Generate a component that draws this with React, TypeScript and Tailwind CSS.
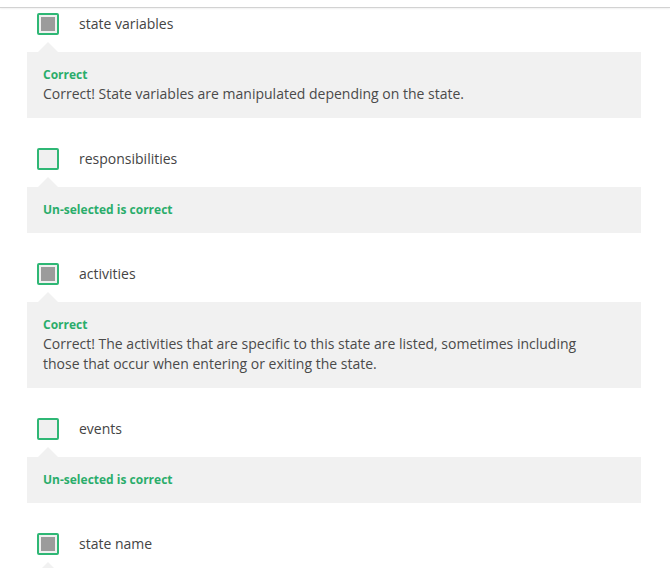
import React from "react";

type Item = {
  label: string;
  checked: boolean;
  title?: string;
  body?: string;
};

const ITEMS: Item[] = [
  {
    label: "state variables",
    checked: true,
    title: "Correct",
    body: "Correct! State variables are manipulated depending on the state.",
  },
  { label: "responsibilities", checked: false, title: "Un-selected is correct" },
  {
    label: "activities",
    checked: true,
    title: "Correct",
    body: "Correct! The activities that are specific to this state are listed, sometimes including those that occur when entering or exiting the state.",
  },
  { label: "events", checked: false, title: "Un-selected is correct" },
  // last row runs past the fold, only the pointer shows
  { label: "state name", checked: true },
];

function Checkbox({ checked }: { checked: boolean }) {
  return (
    <div className="w-[22px] h-[22px] rounded-[2px] border-2 border-[#2fb775] bg-[#f0f0f0] flex items-center justify-center flex-shrink-0">
      {checked && <div className="w-[14px] h-[14px] bg-[#9b9b9b]" />}
    </div>
  );
}

export default function App() {
  return (
    <div className="h-screen bg-white font-['Open_Sans',sans-serif] overflow-hidden">
      {/* top edge */}
      <div className="h-[8px] border-b border-[#d2d2d2] shadow-[0_1px_2px_rgba(0,0,0,0.06)]" />

      <div className="pl-[27px] pr-[29px] pt-[5px]">
        {ITEMS.map((item, i) => (
          <div key={item.label} className={i === 0 ? "" : "mt-[30px]"}>
            <div className="flex items-center h-[22px] pl-[10px] gap-[20px]">
              <Checkbox checked={item.checked} />
              <span className="text-[14px] text-[#444] -translate-y-px">{item.label}</span>
            </div>

            {/* feedback */}
            <div className="relative mt-[17px] bg-[#f1f1f1] px-[16px] py-[14px] min-h-[46px]">
              <div className="absolute -top-[10px] left-[11px] w-0 h-0 border-l-[10px] border-r-[10px] border-b-[10px] border-l-transparent border-r-transparent border-b-[#f1f1f1]" />
              {item.title && (
                <p className="text-[12px] leading-[18px] font-bold text-[#2aad6b]">{item.title}</p>
              )}
              {item.body && (
                <p className="text-[14px] leading-[20px] text-[#4a4a4a] pr-[40px]">{item.body}</p>
              )}
            </div>
          </div>
        ))}
      </div>
    </div>
  );
}
